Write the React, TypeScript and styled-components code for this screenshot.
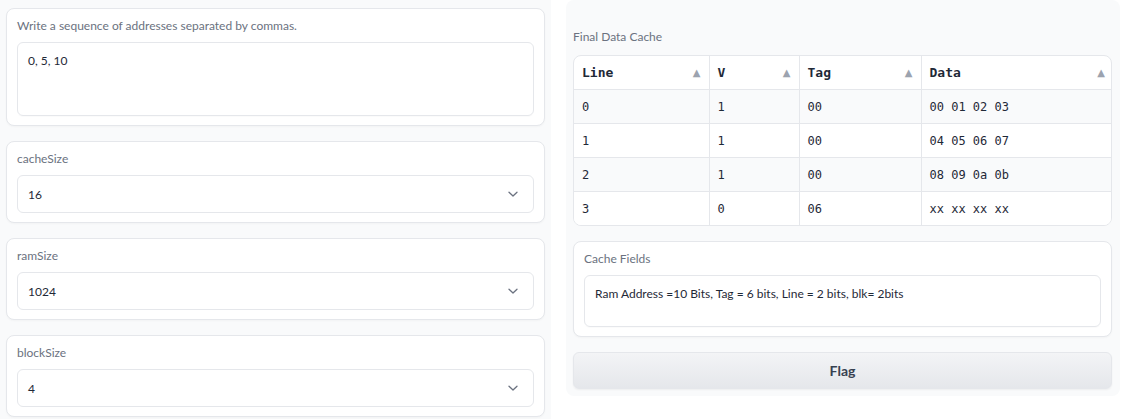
import React from "react";
import styled, { createGlobalStyle } from "styled-components";

const GlobalStyle = createGlobalStyle`
  html, body {
    margin: 0;
    padding: 0;
    background: #ffffff;
    font-family: "Source Sans Pro", Lato, "Noto Sans", sans-serif;
  }
`;

const rows = [
    { line: "0", v: "1", tag: "00", data: "00 01 02 03" },
    { line: "1", v: "1", tag: "00", data: "04 05 06 07" },
    { line: "2", v: "1", tag: "00", data: "08 09 0a 0b" },
    { line: "3", v: "0", tag: "06", data: "xx xx xx xx" },
];

const columns = [
    { key: "line", title: "Line", width: 135 },
    { key: "v", title: "V", width: 90 },
    { key: "tag", title: "Tag", width: 122 },
    { key: "data", title: "Data", width: 192 },
];

const Chevron = () => (
    <svg width="12" height="12" viewBox="0 0 12 12" fill="none">
        <path d="M2 4.2 L6 8 L10 4.2" stroke="#6b7280" strokeWidth="1.3" strokeLinecap="round" strokeLinejoin="round" />
    </svg>
);

const Dropdown = ({ label, value }: { label: string; value: string }) => (
    <Card>
        <Label>{label}</Label>
        <SelectBox>
            <span>{value}</span>
            <Chevron />
        </SelectBox>
    </Card>
);

const App = () => {
    return (
        <>
            <GlobalStyle />
            <Page>
                <LeftColumn>
                    <Card>
                        <Label>Write a sequence of addresses separated by commas.</Label>
                        <TextArea $height={74}>0, 5, 10</TextArea>
                    </Card>
                    <Dropdown label="cacheSize" value="16" />
                    <Dropdown label="ramSize" value="1024" />
                    <Dropdown label="blockSize" value="4" />
                </LeftColumn>

                <RightColumn>
                    <Label>Final Data Cache</Label>
                    <TableWrap>
                        <Table>
                            <colgroup>
                                {columns.map((c) => (
                                    <col key={c.key} style={{ width: c.width }} />
                                ))}
                            </colgroup>
                            <thead>
                                <tr>
                                    {columns.map((c) => (
                                        <HeadCell key={c.key}>
                                            <HeadInner>
                                                <span>{c.title}</span>
                                                <SortArrow>▲</SortArrow>
                                            </HeadInner>
                                        </HeadCell>
                                    ))}
                                </tr>
                            </thead>
                            <tbody>
                                {rows.map((r, i) => (
                                    <BodyRow key={r.line} $striped={i % 2 === 0}>
                                        <Cell>{r.line}</Cell>
                                        <Cell>{r.v}</Cell>
                                        <Cell>{r.tag}</Cell>
                                        <Cell>{r.data}</Cell>
                                    </BodyRow>
                                ))}
                            </tbody>
                        </Table>
                    </TableWrap>

                    <Card>
                        <Label>Cache Fields</Label>
                        <TextArea $height={52}>
                            Ram Address =10 Bits, Tag = 6 bits, Line = 2 bits, blk= 2bits
                        </TextArea>
                    </Card>

                    <FlagButton>Flag</FlagButton>
                </RightColumn>
            </Page>
        </>
    );
};

export default App;

const Page = styled.div`
  display: flex;
  align-items: flex-start;
  gap: 15px;
  width: 1130px;
  height: 419px;
  overflow: hidden;
`;

const LeftColumn = styled.div`
  width: 551px;
  min-height: 419px;
  padding: 8px 6px 0 6px;
  box-sizing: border-box;
  background: #f9fafb;
  display: flex;
  flex-direction: column;
  gap: 15px;
`;

const RightColumn = styled.div`
  width: 554px;
  box-sizing: border-box;
  padding: 28px 8px 7px 7px;
  background: #f9fafb;
  border-radius: 8px;
  display: flex;
  flex-direction: column;
  gap: 9px;
`;

const Card = styled.div`
  background: #ffffff;
  border: 1px solid #e5e7eb;
  border-radius: 8px;
  padding: 8px 10px 9px 10px;
  box-shadow: 0 1px 2px rgba(0, 0, 0, 0.03);
  display: flex;
  flex-direction: column;
  gap: 7px;
`;

const Label = styled.div`
  font-size: 12px;
  line-height: 18px;
  color: #6b7280;
`;

const TextArea = styled.div<{ $height: number }>`
  height: ${(p) => p.$height}px;
  box-sizing: border-box;
  border: 1px solid #e5e7eb;
  border-radius: 6px;
  padding: 9px 10px;
  font-size: 12px;
  line-height: 18px;
  color: #1f2937;
  box-shadow: 0 1px 1px rgba(0, 0, 0, 0.02);
`;

const SelectBox = styled.div`
  height: 38px;
  box-sizing: border-box;
  border: 1px solid #e5e7eb;
  border-radius: 6px;
  padding: 0 14px 0 10px;
  display: flex;
  align-items: center;
  justify-content: space-between;
  font-size: 12px;
  color: #1f2937;
`;

const TableWrap = styled.div`
  border: 1px solid #e5e7eb;
  border-radius: 8px;
  overflow: hidden;
  background: #ffffff;
  margin-bottom: 6px;
`;

const Table = styled.table`
  width: 100%;
  border-collapse: collapse;
  table-layout: fixed;
  font-family: "DejaVu Sans Mono", "Liberation Mono", monospace;
  font-size: 12px;
  color: #1f2937;
`;

const HeadCell = styled.th`
  height: 33px;
  padding: 0 8px;
  text-align: left;
  font-weight: 700;
  font-size: 13px;
  border-right: 1px solid #e5e7eb;
  border-bottom: 1px solid #e5e7eb;
  &:last-child {
    border-right: none;
  }
`;

const HeadInner = styled.div`
  display: flex;
  align-items: center;
  justify-content: space-between;
`;

const SortArrow = styled.span`
  font-size: 10px;
  color: #9ca3af;
  font-family: "DejaVu Sans", sans-serif;
`;

const BodyRow = styled.tr<{ $striped: boolean }>`
  background: ${(p) => (p.$striped ? "#f9fafb" : "#ffffff")};
  &:last-child td {
    border-bottom: none;
  }
`;

const Cell = styled.td`
  height: 33px;
  padding: 0 8px;
  border-right: 1px solid #e5e7eb;
  border-bottom: 1px solid #e5e7eb;
  &:last-child {
    border-right: none;
  }
`;

const FlagButton = styled.button`
  height: 37px;
  margin-top: 6px;
  border: 1px solid #e5e7eb;
  border-radius: 6px;
  background: linear-gradient(to bottom, #f3f4f6, #e5e7eb);
  font-family: inherit;
  font-size: 14px;
  font-weight: 700;
  color: #374151;
  box-shadow: 0 1px 2px rgba(0, 0, 0, 0.05);
`;
